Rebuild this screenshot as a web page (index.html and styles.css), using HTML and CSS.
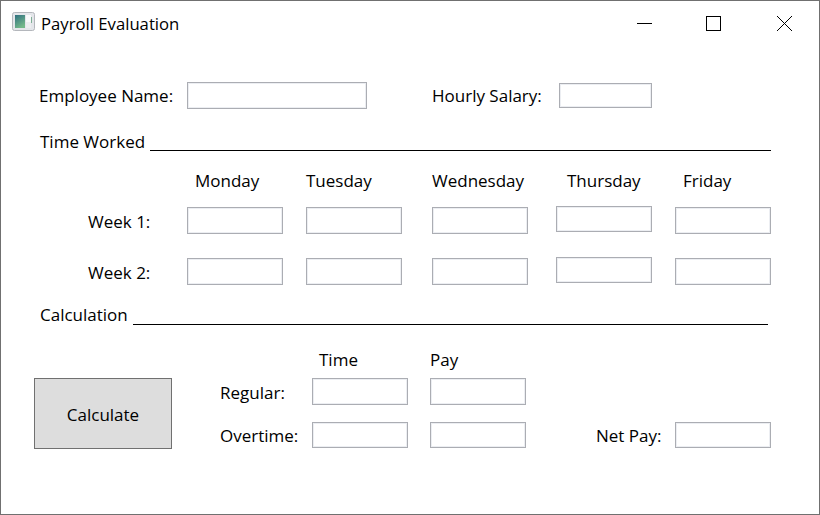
FILE: index.html
```html
<!DOCTYPE html>
<html lang="en">
<head>
    <meta charset="UTF-8">
    <meta name="viewport" content="width=device-width, initial-scale=1.0">
    <title>Payroll Evaluation</title>
    <link rel="stylesheet" href="styles.css">
</head>
<body>
    <div class="window">
        <div class="titlebar">
            <svg class="app-icon" width="24" height="20" viewBox="0 0 24 20">
                <defs>
                    <linearGradient id="pane" x1="0" y1="0" x2="0.5" y2="1">
                        <stop offset="0" stop-color="#2f6f80"/>
                        <stop offset="1" stop-color="#74b98a"/>
                    </linearGradient>
                </defs>
                <rect x="0.5" y="0.5" width="22" height="18" rx="2" fill="#e4e6ea" stroke="#b4b7bc"/>
                <rect x="3" y="3" width="10" height="13" fill="url(#pane)"/>
                <rect x="14" y="3" width="5" height="7" fill="#f8f9fa"/>
                <rect x="14" y="10" width="5" height="6" fill="#eceef0"/>
                <rect x="19" y="5" width="1" height="6" fill="#7fae95"/>
            </svg>
            <span class="title">Payroll Evaluation</span>
            <div class="controls">
                <svg class="control" width="70" height="46" viewBox="0 0 70 46">
                    <path d="M28 22.5H43" stroke="#000" fill="none"/>
                </svg>
                <svg class="control" width="70" height="46" viewBox="0 0 70 46">
                    <rect x="27.5" y="15.5" width="14" height="14" stroke="#000" fill="none"/>
                </svg>
                <svg class="control" width="70" height="46" viewBox="0 0 70 46">
                    <path d="M28 15L43 30M43 15L28 30" stroke="#000" fill="none"/>
                </svg>
            </div>
        </div>

        <div class="content">
            <div class="top-row">
                <label class="name-label">Employee Name:</label>
                <input class="field name-field" type="text">
                <label class="salary-label">Hourly Salary:</label>
                <input class="field salary-field" type="text">
            </div>

            <div class="section section-time">
                <span>Time Worked</span>
                <div class="rule"></div>
            </div>

            <div class="week-grid">
                <div></div>
                <div class="day day-monday">Monday</div>
                <div class="day">Tuesday</div>
                <div class="day">Wednesday</div>
                <div class="day day-thursday">Thursday</div>
                <div class="day day-friday">Friday</div>

                <label class="week-label">Week 1:</label>
                <input class="field" type="text">
                <input class="field" type="text">
                <input class="field" type="text">
                <input class="field raised" type="text">
                <input class="field" type="text">

                <label class="week-label">Week 2:</label>
                <input class="field" type="text">
                <input class="field" type="text">
                <input class="field" type="text">
                <input class="field raised" type="text">
                <input class="field" type="text">
            </div>

            <div class="section section-calc">
                <span>Calculation</span>
                <div class="rule"></div>
            </div>

            <div class="calc">
                <button class="calc-button">Calculate</button>
                <div class="calc-grid">
                    <div></div>
                    <div class="col-time">Time</div>
                    <div class="col-pay">Pay</div>
                    <div></div>
                    <div></div>

                    <label class="regular-label">Regular:</label>
                    <input class="field" type="text">
                    <input class="field" type="text">
                    <div></div>
                    <div></div>

                    <label>Overtime:</label>
                    <input class="field short" type="text">
                    <input class="field short" type="text">
                    <label class="net-label">Net Pay:</label>
                    <input class="field short" type="text">
                </div>
            </div>
        </div>
    </div>
</body>
</html>
```

FILE: styles.css
```css
/* Payroll window */
html, body {
    margin: 0;
    padding: 0;
}

body {
    font-family: "Open Sans", "Noto Sans", Arial, sans-serif;
    font-size: 17px;
    color: #000;
    background-color: #fff;
}

.window {
    width: 820px;
    height: 515px;
    box-sizing: border-box;
    border: 1px solid #707070;
    overflow: hidden;
}

.titlebar {
    display: flex;
    align-items: center;
    height: 45px;
    padding-left: 11px;
}

.app-icon {
    margin-right: 5px;
    margin-top: -3px;
}

.title {
    margin-top: -1px;
    font-size: 16.7px;
}

.controls {
    display: flex;
    margin-left: auto;
    margin-top: 1px;
}

.control {
    display: block;
}

.field {
    box-sizing: border-box;
    display: block;
    width: 96px;
    height: 27px;
    margin: 0;
    padding: 0;
    background-color: #fff;
    border: 1px solid #abadb3;
    border-radius: 0;
    box-shadow: inset 0 0 0 1px #eceef2;
    outline: none;
}

.raised {
    height: 26px;
    margin-top: -1px;
}

.short {
    height: 26px;
}

.content {
    padding-left: 33px;
}

.top-row {
    display: flex;
    align-items: center;
    height: 27px;
    margin-top: 36px;
}

.name-label {
    width: 153px;
    padding-left: 5px;
    box-sizing: border-box;
}

.name-field {
    width: 180px;
}

.salary-label {
    width: 127px;
    margin-left: 65px;
}

.salary-field {
    width: 93px;
    height: 25px;
}

.section {
    display: flex;
    align-items: center;
    height: 24px;
    padding-left: 6px;
}

.section-time {
    margin-top: 22px;
    width: 731px;
}

.section-calc {
    margin-top: 19px;
    width: 728px;
}

.section span {
    margin-right: 5px;
    margin-top: -4px;
}

.rule {
    flex: 1;
    height: 1px;
    margin-top: 14px;
    background-color: #000;
}

.section-calc .rule {
    margin-top: 16px;
}

.week-grid {
    display: grid;
    grid-template-columns: 153px 119px 126px 124px 119px 96px;
    grid-template-rows: 52px 51px 27px;
}

.day {
    padding-top: 14px;
}

.day-monday {
    padding-left: 8px;
}

.day-thursday {
    padding-left: 11px;
}

.day-friday {
    padding-left: 8px;
}

.week-label {
    padding-left: 54px;
    line-height: 29px;
}

.calc {
    display: flex;
    margin-top: 14px;
}

.calc-button {
    width: 138px;
    height: 71px;
    margin: 36px 0 0 0;
    padding: 2px 0 0 0;
    font-family: inherit;
    font-size: 17px;
    color: #000;
    background-color: #ddd;
    border: 1px solid #707070;
    border-radius: 0;
}

.calc-grid {
    display: grid;
    grid-template-columns: 92px 118px 165px 80px 96px;
    grid-template-rows: 36px 44px 26px;
    margin-left: 48px;
}

.calc-grid label {
    line-height: 27px;
}

.calc-grid .regular-label {
    line-height: 29px;
}

.col-time {
    padding-left: 7px;
    line-height: 36px;
}

.col-pay {
    line-height: 36px;
}

.net-label {
    margin-left: 1px;
}
```
